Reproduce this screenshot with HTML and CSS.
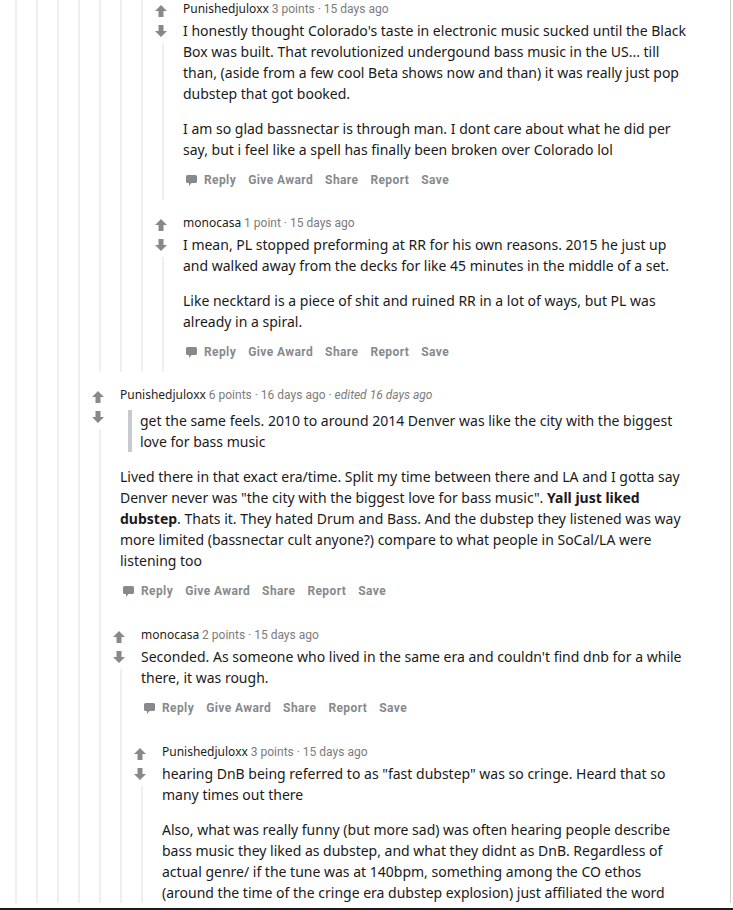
FILE: index.html
```html
<!DOCTYPE html>
<html lang="en">
<head>
    <meta charset="UTF-8">
    <meta name="viewport" content="width=device-width, initial-scale=1.0">
    <title>Comments</title>
    <link rel="stylesheet" href="styles.css">
</head>
<body>
    <div class="page">
        <div class="card">
            <div class="thread">
                <div class="comment cut">
                    <div class="rail"><div class="line"></div></div>
                    <div class="main">
                        <div class="comment cut">
                            <div class="rail"><div class="line"></div></div>
                            <div class="main">
                                <div class="comment cut">
                                    <div class="rail"><div class="line"></div></div>
                                    <div class="main">
                                        <div class="comment cut">
                                            <div class="rail"><div class="line"></div></div>
                                            <div class="main">

                                                <!-- earlier sibling, header scrolled away -->
                                                <div class="comment cut">
                                                    <div class="rail"><div class="line"></div></div>
                                                    <div class="main">
                                                        <div class="comment cut">
                                                            <div class="rail"><div class="line"></div></div>
                                                            <div class="main">
                                                                <div class="comment cut">
                                                                    <div class="rail"><div class="line"></div></div>
                                                                    <div class="main">

                                                                        <div class="comment">
                                                                            <div class="rail">
                                                                                <div class="vote">
                                                                                    <svg viewBox="0 0 12 12"><path d="M6 0L12 6H8.5V12H3.5V6H0Z"/></svg>
                                                                                    <svg viewBox="0 0 12 12"><path d="M6 12L0 6H3.5V0H8.5V6H12Z"/></svg>
                                                                                </div>
                                                                                <div class="line"></div>
                                                                            </div>
                                                                            <div class="main">
                                                                                <div class="content">
                                                                                    <div class="meta"><span class="author">Punishedjuloxx</span> 3 points · 15 days ago</div>
                                                                                    <div class="body">
                                                                                        <p>I honestly thought Colorado's taste in electronic music sucked until the Black Box was built. That revolutionized undergound bass music in the US... till than, (aside from a few cool Beta shows now and than) it was really just pop dubstep that got booked.</p>
                                                                                        <p>I am so glad bassnectar is through man. I dont care about what he did per say, but i feel like a spell has finally been broken over Colorado lol</p>
                                                                                    </div>
                                                                                    <div class="actions">
                                                                                        <span class="reply"><svg viewBox="0 0 11 11"><path d="M1.5 0h8A1.5 1.5 0 0 1 11 1.5v5A1.5 1.5 0 0 1 9.5 8H5.5L3 11V8H1.5A1.5 1.5 0 0 1 0 6.5v-5A1.5 1.5 0 0 1 1.5 0Z"/></svg>Reply</span>
                                                                                        <span>Give Award</span>
                                                                                        <span>Share</span>
                                                                                        <span>Report</span>
                                                                                        <span>Save</span>
                                                                                    </div>
                                                                                </div>
                                                                            </div>
                                                                        </div>

                                                                        <div class="comment">
                                                                            <div class="rail">
                                                                                <div class="vote">
                                                                                    <svg viewBox="0 0 12 12"><path d="M6 0L12 6H8.5V12H3.5V6H0Z"/></svg>
                                                                                    <svg viewBox="0 0 12 12"><path d="M6 12L0 6H3.5V0H8.5V6H12Z"/></svg>
                                                                                </div>
                                                                                <div class="line"></div>
                                                                            </div>
                                                                            <div class="main">
                                                                                <div class="content">
                                                                                    <div class="meta"><span class="author">monocasa</span> 1 point · 15 days ago</div>
                                                                                    <div class="body">
                                                                                        <p>I mean, PL stopped preforming at RR for his own reasons. 2015 he just up and walked away from the decks for like 45 minutes in the middle of a set.</p>
                                                                                        <p>Like necktard is a piece of shit and ruined RR in a lot of ways, but PL was already in a spiral.</p>
                                                                                    </div>
                                                                                    <div class="actions">
                                                                                        <span class="reply"><svg viewBox="0 0 11 11"><path d="M1.5 0h8A1.5 1.5 0 0 1 11 1.5v5A1.5 1.5 0 0 1 9.5 8H5.5L3 11V8H1.5A1.5 1.5 0 0 1 0 6.5v-5A1.5 1.5 0 0 1 1.5 0Z"/></svg>Reply</span>
                                                                                        <span>Give Award</span>
                                                                                        <span>Share</span>
                                                                                        <span>Report</span>
                                                                                        <span>Save</span>
                                                                                    </div>
                                                                                </div>
                                                                            </div>
                                                                        </div>

                                                                    </div>
                                                                </div>
                                                            </div>
                                                        </div>
                                                    </div>
                                                </div>

                                                <div class="comment">
                                                    <div class="rail">
                                                        <div class="vote">
                                                            <svg viewBox="0 0 12 12"><path d="M6 0L12 6H8.5V12H3.5V6H0Z"/></svg>
                                                            <svg viewBox="0 0 12 12"><path d="M6 12L0 6H3.5V0H8.5V6H12Z"/></svg>
                                                        </div>
                                                        <div class="line"></div>
                                                    </div>
                                                    <div class="main">
                                                        <div class="content">
                                                            <div class="meta"><span class="author">Punishedjuloxx</span> 6 points · 16 days ago · <i>edited 16 days ago</i></div>
                                                            <div class="body">
                                                                <blockquote>get the same feels. 2010 to around 2014 Denver was like the city with the biggest love for bass music</blockquote>
                                                                <p>Lived there in that exact era/time. Split my time between there and LA and I gotta say Denver never was "the city with the biggest love for bass music". <b>Yall just liked dubstep</b>. Thats it. They hated Drum and Bass. And the dubstep they listened was way more limited (bassnectar cult anyone?) compare to what people in SoCal/LA were listening too</p>
                                                            </div>
                                                            <div class="actions">
                                                                <span class="reply"><svg viewBox="0 0 11 11"><path d="M1.5 0h8A1.5 1.5 0 0 1 11 1.5v5A1.5 1.5 0 0 1 9.5 8H5.5L3 11V8H1.5A1.5 1.5 0 0 1 0 6.5v-5A1.5 1.5 0 0 1 1.5 0Z"/></svg>Reply</span>
                                                                <span>Give Award</span>
                                                                <span>Share</span>
                                                                <span>Report</span>
                                                                <span>Save</span>
                                                            </div>
                                                        </div>

                                                        <div class="comment">
                                                            <div class="rail">
                                                                <div class="vote">
                                                                    <svg viewBox="0 0 12 12"><path d="M6 0L12 6H8.5V12H3.5V6H0Z"/></svg>
                                                                    <svg viewBox="0 0 12 12"><path d="M6 12L0 6H3.5V0H8.5V6H12Z"/></svg>
                                                                </div>
                                                                <div class="line"></div>
                                                            </div>
                                                            <div class="main">
                                                                <div class="content">
                                                                    <div class="meta"><span class="author">monocasa</span> 2 points · 15 days ago</div>
                                                                    <div class="body">
                                                                        <p>Seconded. As someone who lived in the same era and couldn't find dnb for a while there, it was rough.</p>
                                                                    </div>
                                                                    <div class="actions">
                                                                        <span class="reply"><svg viewBox="0 0 11 11"><path d="M1.5 0h8A1.5 1.5 0 0 1 11 1.5v5A1.5 1.5 0 0 1 9.5 8H5.5L3 11V8H1.5A1.5 1.5 0 0 1 0 6.5v-5A1.5 1.5 0 0 1 1.5 0Z"/></svg>Reply</span>
                                                                        <span>Give Award</span>
                                                                        <span>Share</span>
                                                                        <span>Report</span>
                                                                        <span>Save</span>
                                                                    </div>
                                                                </div>

                                                                <div class="comment">
                                                                    <div class="rail">
                                                                        <div class="vote">
                                                                            <svg viewBox="0 0 12 12"><path d="M6 0L12 6H8.5V12H3.5V6H0Z"/></svg>
                                                                            <svg viewBox="0 0 12 12"><path d="M6 12L0 6H3.5V0H8.5V6H12Z"/></svg>
                                                                        </div>
                                                                        <div class="line"></div>
                                                                    </div>
                                                                    <div class="main">
                                                                        <div class="content">
                                                                            <div class="meta"><span class="author">Punishedjuloxx</span> 3 points · 15 days ago</div>
                                                                            <div class="body">
                                                                                <p>hearing DnB being referred to as "fast dubstep" was so cringe. Heard that so many times out there</p>
                                                                                <p>Also, what was really funny (but more sad) was often hearing people describe bass music they liked as dubstep, and what they didnt as DnB. Regardless of actual genre/ if the tune was at 140bpm, something among the CO ethos (around the time of the cringe era dubstep explosion) just affiliated the word</p>
                                                                            </div>
                                                                        </div>
                                                                    </div>
                                                                </div>

                                                            </div>
                                                        </div>

                                                    </div>
                                                </div>

                                            </div>
                                        </div>
                                    </div>
                                </div>
                            </div>
                        </div>
                    </div>
                </div>
            </div>
        </div>
    </div>
</body>
</html>
```

FILE: styles.css
```css
body {
    margin: 0;
    background-color: #ffffff;
}

.page {
    height: 908px;
    overflow: hidden;
    border-bottom: 2px solid #1c1c1c;
}

.card {
    width: 731px;
    min-height: 100%;
    box-sizing: border-box;
    background-color: #ffffff;
    border-right: 1px solid #cccccc;
    padding: 0 41px 0 6px;
}

/* the view is scrolled a little, the first comment starts above the top */
.thread {
    margin-top: -14px;
}

.comment {
    display: flex;
    padding-top: 14px;
}

.content + .comment {
    padding-top: 15px;
}

.comment.cut {
    padding-top: 0;
}

.rail {
    width: 21px;
    flex-shrink: 0;
    display: flex;
    flex-direction: column;
}

.vote {
    display: flex;
    flex-direction: column;
    gap: 8px;
    padding: 5px 0 0 2px;
}

.vote svg {
    display: block;
    width: 12px;
    height: 12px;
    fill: #878a8c;
}

.line {
    flex: 1;
    width: 2px;
    margin: 6px 0 0 9px;
    background-color: #edeff1;
}

.cut > .rail > .line {
    margin-top: 0;
}

.main {
    flex: 1;
    min-width: 0;
}

.content {
    padding-left: 9px;
}

.meta {
    font-family: Roboto, "Liberation Sans", sans-serif;
    font-size: 12px;
    line-height: 18px;
    color: #7c7c7c;
    white-space: nowrap;
}

.meta .author {
    font-family: "Noto Sans", sans-serif;
    color: #1c1c1c;
}

.body {
    margin-top: 2px;
    font-family: "Noto Sans", sans-serif;
    font-size: 14px;
    line-height: 21px;
    color: #1a1a1b;
}

.body p {
    margin: 0 0 14px;
}

.body p:last-child {
    margin-bottom: 0;
}

.body b {
    font-weight: 700;
}

.body blockquote {
    margin: 6px 0 14px 8px;
    padding-left: 8px;
    border-left: 4px solid #c8cbcd;
}

.actions {
    display: flex;
    align-items: center;
    gap: 12px;
    height: 24px;
    margin: 8px 0 8px 3px;
    font-family: Roboto, "Liberation Sans", sans-serif;
    font-size: 12px;
    font-weight: 700;
    letter-spacing: 0.4px;
    color: #878a8c;
}

.reply {
    display: flex;
    align-items: center;
    gap: 7px;
}

.reply svg {
    width: 11px;
    height: 11px;
    fill: #878a8c;
}
```
